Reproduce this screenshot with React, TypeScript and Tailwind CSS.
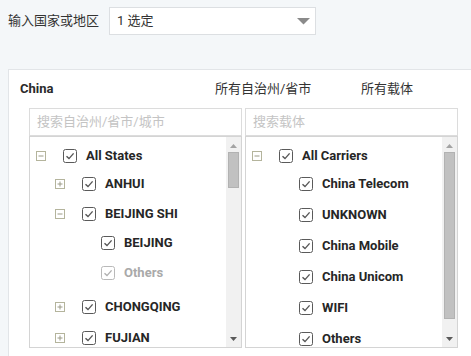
import React from "react";

const CJK = { fontFamily: 'Roboto, "Noto Sans CJK SC", sans-serif' };

function Check({ dim }: { dim?: boolean }) {
  const c = dim ? "#b9b9b9" : "#5a5a5a";
  const k = dim ? "#b0b0b0" : "#555";
  return (
    <svg width="14" height="14" viewBox="0 0 14 14" className="shrink-0">
      <rect x="0.5" y="0.5" width="13" height="13" rx="2" fill="white" stroke={c} />
      <polyline points="3.5,7.2 6,9.6 10.6,4.4" fill="none" stroke={k} strokeWidth="1.4" />
    </svg>
  );
}

function Toggle({ open }: { open: boolean }) {
  return (
    <svg width="10" height="10" viewBox="0 0 10 10" className="shrink-0">
      <rect x="0.5" y="0.5" width="9" height="9" fill="white" stroke="#b4b49c" />
      <line x1="2.5" y1="5" x2="7.5" y2="5" stroke="#9a9a86" />
      {!open && <line x1="5" y1="2.5" x2="5" y2="7.5" stroke="#9a9a86" />}
    </svg>
  );
}

type Row = {
  label: string;
  toggle?: "open" | "closed";
  indent: string;
  mt: string;
  dim?: boolean;
};

function TreeRow({ r }: { r: Row }) {
  return (
    <div className={`flex items-center h-[20px] ${r.mt} ${r.indent}`}>
      <div className="w-[27px] flex items-center">
        {r.toggle && <Toggle open={r.toggle === "open"} />}
      </div>
      <Check dim={r.dim} />
      <span
        className={`ml-[9px] text-[13px] font-bold ${r.dim ? "text-[#a9a9a9]" : "text-[#262626]"}`}
        style={{ fontFamily: "Roboto, sans-serif" }}
      >
        {r.label}
      </span>
    </div>
  );
}

function ScrollBar({ thumb }: { thumb: string }) {
  return (
    <div className="w-[15px] h-full bg-[#f1f1f1] flex flex-col items-center shrink-0">
      <svg width="9" height="6" viewBox="0 0 9 6" className="mt-[6px]">
        <polygon points="4.5,1 8,5 1,5" fill="#a3a3a3" />
      </svg>
      <div className={`w-[11px] mt-[3px] bg-[#c1c1c1] border border-[#b2b2b2] ${thumb}`} />
      <div className="flex-1" />
      <svg width="9" height="6" viewBox="0 0 9 6" className="mb-[5px]">
        <polygon points="1,1 8,1 4.5,5" fill="#5a5a5a" />
      </svg>
    </div>
  );
}

function Column({
  placeholder,
  rows,
  thumb,
}: {
  placeholder: string;
  rows: Row[];
  thumb: string;
}) {
  return (
    <div className="w-[213px] flex flex-col shrink-0">
      <div
        className="h-[28px] border border-[#dcdcdc] bg-white flex items-center pl-[7px] text-[13px] text-[#c4c4c4]"
        style={CJK}
      >
        {placeholder}
      </div>
      <div className="h-[212px] border border-[#d4d4d4] bg-white flex">
        <div className="flex-1 pl-[6px] overflow-hidden">
          {rows.map((r) => (
            <TreeRow key={r.label + r.mt} r={r} />
          ))}
        </div>
        <ScrollBar thumb={thumb} />
      </div>
    </div>
  );
}

const leftRows: Row[] = [
  { label: "All States", toggle: "open", indent: "pl-0", mt: "mt-[9px]" },
  { label: "ANHUI", toggle: "closed", indent: "pl-[19px]", mt: "mt-[8px]" },
  { label: "BEIJING SHI", toggle: "open", indent: "pl-[19px]", mt: "mt-[10px]" },
  { label: "BEIJING", indent: "pl-[38px]", mt: "mt-[9px]" },
  { label: "Others", indent: "pl-[38px]", mt: "mt-[10px]", dim: true },
  { label: "CHONGQING", toggle: "closed", indent: "pl-[19px]", mt: "mt-[14px]" },
  { label: "FUJIAN", toggle: "closed", indent: "pl-[19px]", mt: "mt-[11px]" },
];

const rightRows: Row[] = [
  { label: "All Carriers", toggle: "open", indent: "pl-0", mt: "mt-[9px]" },
  { label: "China Telecom", indent: "pl-[20px]", mt: "mt-[8px]" },
  { label: "UNKNOWN", indent: "pl-[20px]", mt: "mt-[11px]" },
  { label: "China Mobile", indent: "pl-[20px]", mt: "mt-[11px]" },
  { label: "China Unicom", indent: "pl-[20px]", mt: "mt-[11px]" },
  { label: "WIFI", indent: "pl-[20px]", mt: "mt-[11px]" },
  { label: "Others", indent: "pl-[20px]", mt: "mt-[11px]" },
];

export default function App() {
  return (
    <div className="w-[471px] h-[356px] overflow-hidden bg-[#f4f7f9]" style={CJK}>
      <div className="flex items-center pt-[7px] pl-[8px]">
        <div className="w-[101px] text-[13px] text-[#333]">输入国家或地区</div>
        <div className="w-[207px] h-[28px] bg-white border border-[#dcdfe2] flex items-center pl-[7px] pr-[5px]">
          <span className="flex-1 text-[13px] text-[#333]">1 选定</span>
          <svg width="13" height="7" viewBox="0 0 13 7">
            <polygon points="0,0 13,0 6.5,6.5" fill="#8a8a8a" />
          </svg>
        </div>
      </div>
      <div className="ml-[8px] mt-[34px] bg-white border-l border-t border-[#e2e5e8] pl-[11px] h-[300px]">
        <div className="h-[38px] flex items-center">
          <span className="w-[195px] text-[13px] font-bold text-[#2a2a2a]" style={{ fontFamily: "Roboto, sans-serif" }}>
            China
          </span>
          <span className="w-[146px] text-[13px] text-[#333]">所有自治州/省市</span>
          <span className="text-[13px] text-[#333]">所有载体</span>
        </div>
        <div className="flex gap-[3px] ml-[9px]">
          <Column placeholder="搜索自治州/省市/城市" rows={leftRows} thumb="h-[36px]" />
          <Column placeholder="搜索载体" rows={rightRows} thumb="h-[167px]" />
        </div>
      </div>
    </div>
  );
}
